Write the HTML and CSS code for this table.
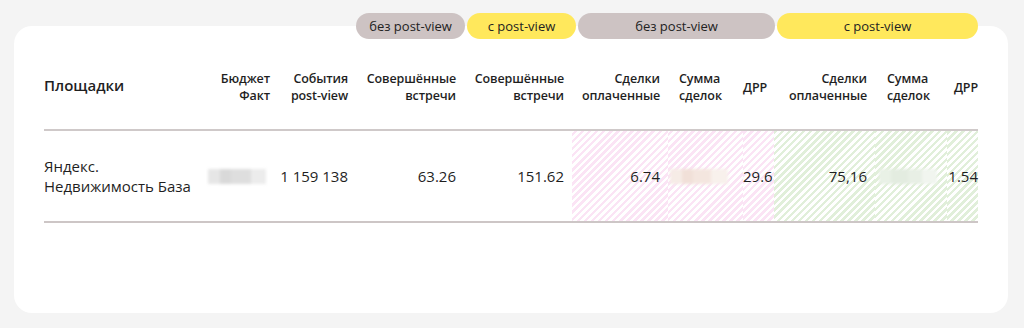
FILE: index.html
```html
<!DOCTYPE html>
<html lang="ru">
<head>
<meta charset="utf-8">
<link rel="stylesheet" href="styles.css">
</head>
<body>
<div class="page">
  <div class="pills">
    <span class="pill pill-grey pill-s">без post-view</span>
    <span class="pill pill-yellow pill-s">с post-view</span>
    <span class="pill pill-grey pill-m">без post-view</span>
    <span class="pill pill-yellow pill-l">с post-view</span>
  </div>
  <div class="card">
    <table class="grid">
      <colgroup>
        <col class="w1"><col class="w2"><col class="w3"><col class="w4"><col class="w5"><col class="w6"><col class="w7"><col class="w8"><col class="w9"><col class="w10"><col class="w11">
      </colgroup>
      <thead>
        <tr>
          <th class="name">Площадки</th>
          <th class="r">Бюджет<br>Факт</th>
          <th class="r">События<br>post-view</th>
          <th class="r">Совершённые<br>встречи</th>
          <th class="r pr8">Совершённые<br>встречи</th>
          <th class="r pr8">Сделки<br>оплаченные</th>
          <th class="l pl11">Сумма<br>сделок</th>
          <th class="l">ДРР</th>
          <th class="r pr8">Сделки<br>оплаченные</th>
          <th class="l pl12">Сумма<br>сделок</th>
          <th class="r">ДРР</th>
        </tr>
      </thead>
      <tbody>
        <tr>
          <td class="name">Яндекс.<br>Недвижимость База</td>
          <td class="r"><div class="blur blur-grey"></div></td>
          <td class="r">1 159 138</td>
          <td class="r">63.26</td>
          <td class="r pr8">151.62</td>
          <td class="r pr8 pink">6.74</td>
          <td class="l pl2 pink"><div class="blur blur-peach"></div></td>
          <td class="l pink">29.6</td>
          <td class="r pr8 green">75,16</td>
          <td class="l pl4 green"><div class="blur blur-green"></div></td>
          <td class="r green">1.54</td>
        </tr>
      </tbody>
    </table>
  </div>
</div>
</body>
</html>
```

FILE: styles.css
```css
* { box-sizing: border-box; }
html, body {
  margin: 0;
  padding: 0;
  background: #f4f4f4;
}
body {
  font-family: "Open Sans", "Noto Sans", sans-serif;
  color: #1f1f1f;
  width: 1024px;
  height: 328px;
  overflow: hidden;
}
.page {
  padding: 13px 16px 0 14px;
}
.pills {
  display: flex;
  gap: 2px;
  padding-left: 342px;
  margin-bottom: -13px;
  position: relative;
  z-index: 1;
}
.pill {
  height: 26px;
  border-radius: 13px;
  display: flex;
  align-items: center;
  justify-content: center;
  font-size: 13px;
  color: #222;
}
.pill-s { width: 109px; }
.pill-m { width: 197px; }
.pill-l { width: 201px; }
.pill-grey { background: #cdc3c3; }
.pill-yellow { background: #ffe85c; }
.card {
  background: #fff;
  border-radius: 18px;
  height: 287px;
  padding: 19px 30px 0 30px;
}
.grid {
  border-collapse: collapse;
  table-layout: fixed;
  width: 934px;
}
.w1 { width: 156px; }
.w2 { width: 70px; }
.w3 { width: 78px; }
.w4 { width: 108px; }
.w5 { width: 116px; }
.w6 { width: 96px; }
.w7 { width: 75px; }
.w8 { width: 31px; }
.w9 { width: 101px; }
.w10 { width: 72px; }
.w11 { width: 31px; }
th {
  height: 85px;
  font-size: 12.5px;
  font-weight: 600;
  line-height: 17px;
  padding: 0;
  vertical-align: middle;
  border-bottom: 2px solid #cfc9c9;
  white-space: nowrap;
  letter-spacing: -0.1px;
}
th.name {
  font-size: 15px;
  font-weight: 650;
  letter-spacing: 0;
  text-align: left;
  padding-bottom: 3px;
}
td {
  height: 92px;
  font-size: 15px;
  line-height: 20px;
  padding: 0;
  vertical-align: middle;
  border-bottom: 2px solid #cdc6c6;
  white-space: nowrap;
}
td.name { text-align: left; }
.r { text-align: right; }
.l { text-align: left; }
.pr8 { padding-right: 8px; }
.pl2 { padding-left: 2px; }
.pl4 { padding-left: 4px; }
.pl11 { padding-left: 11px; }
.pl12 { padding-left: 12px; }
.pink {
  background: repeating-linear-gradient(-45deg, #ffffff 0 2.5px, #fbe4f5 2.5px 5px);
}
.green {
  background: repeating-linear-gradient(-45deg, #ffffff 0 2.5px, #e1efda 2.5px 5px);
}
.blur {
  height: 15px;
  filter: blur(1.5px);
}
.blur-grey {
  width: 58px;
  margin-left: 8px;
  background: linear-gradient(90deg, #e6e6e6 0 20%, #d9d9d9 20% 40%, #dedede 40% 75%, #ececec 75%);
}
.blur-peach {
  width: 58px;
  background: linear-gradient(90deg, #f6ece6 0 20%, #f1e0d8 20% 40%, #f4e6df 40% 70%, #f8f1ec 70%);
}
.blur-green {
  width: 58px;
  background: linear-gradient(90deg, #e9f1e6 0 20%, #e3ece0 20% 50%, #e8efe5 50% 75%, #f1f5ef 75%);
}
```
